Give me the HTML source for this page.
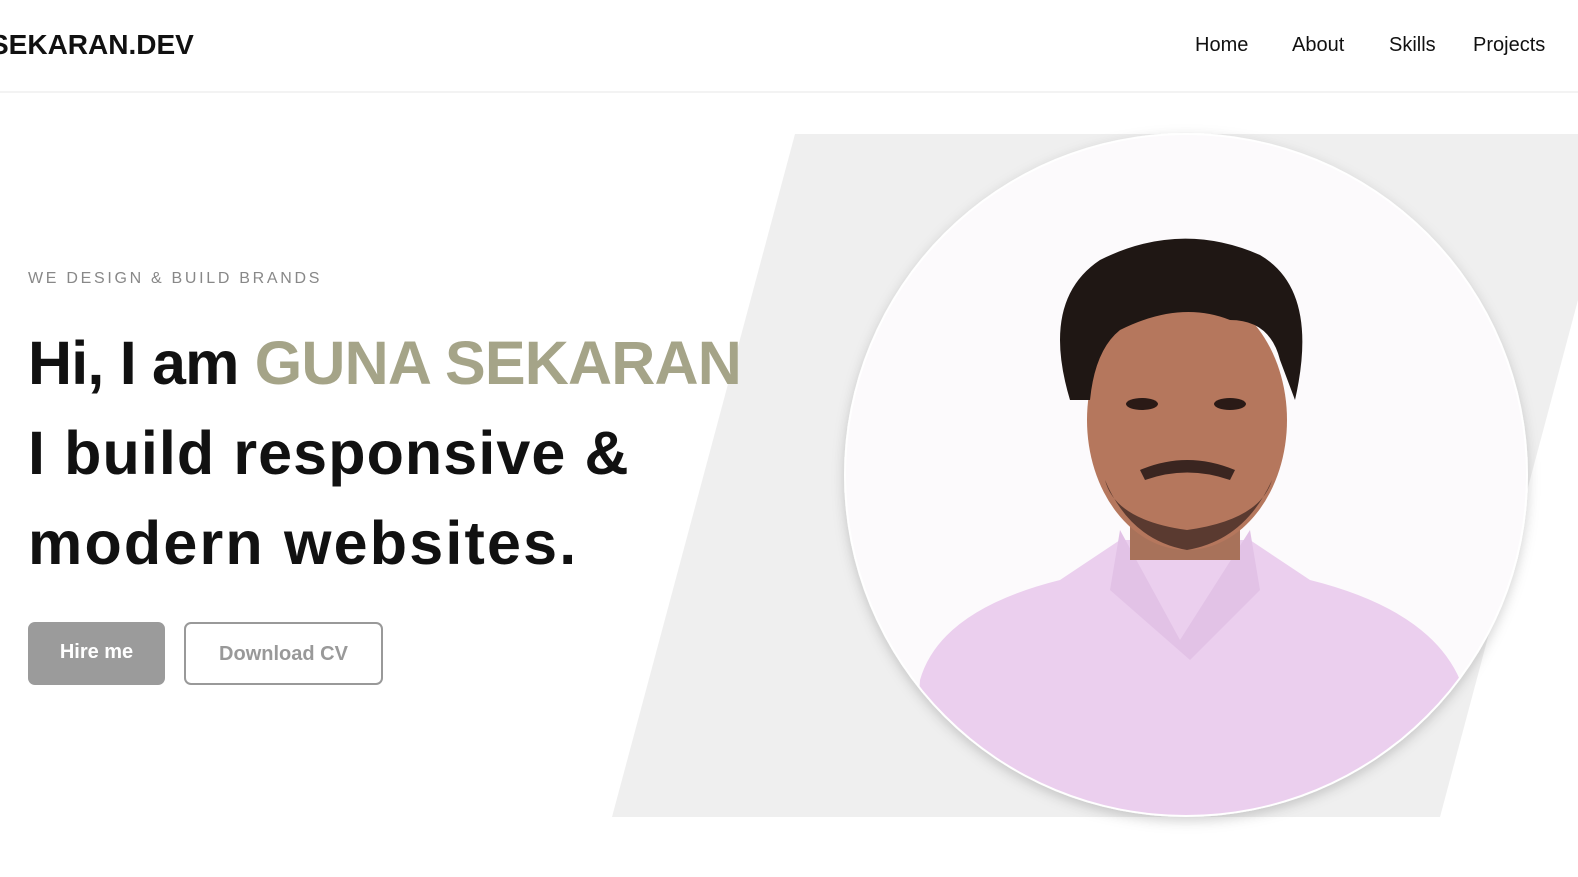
<!DOCTYPE html>
<html><head><style>
*{margin:0;padding:0;box-sizing:border-box}
body{width:1578px;height:877px;overflow:hidden;background:#fff;font-family:"Liberation Sans",sans-serif;position:relative}
.hdr{position:absolute;left:0;top:0;width:1578px;height:93px;background:#fff;border-bottom:2px solid #f3f3f3}
.logo{position:absolute;left:-10px;top:29px;font-size:28px;font-weight:bold;color:#111;letter-spacing:0}
.nav{position:absolute;top:34px;font-size:20px;color:#111}
.tag{position:absolute;left:28px;top:270px;font-size:16px;letter-spacing:2.7px;color:#888}
h1{position:absolute;left:28px;top:318px;font-size:61px;line-height:90px;font-weight:bold;color:#111;white-space:nowrap}
h1 div:nth-child(1){letter-spacing:-0.8px}
h1 div:nth-child(2){letter-spacing:1.1px}
h1 div:nth-child(3){letter-spacing:2.2px}
h1 span{color:#a5a488}
.b1{position:absolute;left:28px;top:622px;width:137px;height:63px;background:#9b9b9b;border-radius:7px;color:#fff;font-weight:bold;font-size:20px;text-align:center;line-height:60px}
.b2{position:absolute;left:184px;top:622px;width:199px;height:63px;border:2px solid #999;border-radius:7px;color:#999;font-weight:bold;font-size:20px;text-align:center;line-height:61px}
</style></head><body>
<svg style="position:absolute;left:0;top:0" width="1578" height="877">
<defs>
<clipPath id="c"><circle cx="1186" cy="475" r="340"/></clipPath>
<filter id="s" x="-20%" y="-20%" width="140%" height="140%"><feDropShadow dx="0" dy="4" stdDeviation="6" flood-color="#000" flood-opacity="0.18"/></filter>
</defs>
<polygon points="795,134 1578,134 1578,300 1440,817 612,817" fill="#efefef"/>
<circle cx="1186" cy="475" r="342" fill="#fff" filter="url(#s)"/>
<g clip-path="url(#c)">
<rect x="840" y="130" width="700" height="700" fill="#fcfafc"/>
<path d="M920,680 Q940,610 1060,580 L1120,540 L1250,540 L1310,580 Q1430,610 1460,680 L1470,830 L910,830 Z" fill="#ebcfee"/>
<path d="M1120,530 L1180,640 L1250,530 L1260,590 L1190,660 L1110,590 Z" fill="#e2c2e6"/>
<rect x="1130" y="470" width="110" height="90" fill="#a8725a"/>
<ellipse cx="1187" cy="420" rx="100" ry="130" fill="#b5775d"/>
<path d="M1140,470 Q1187,450 1235,470 L1230,480 Q1187,465 1145,480 Z" fill="#3a2520"/>
<path d="M1105,480 Q1130,540 1187,550 Q1245,540 1272,480 Q1260,520 1187,530 Q1115,520 1105,480 Z" fill="#5a3a30"/>
<path d="M1070,400 Q1040,300 1100,260 Q1180,220 1260,255 Q1320,290 1295,400 L1280,360 Q1270,320 1230,320 Q1180,300 1120,330 Q1095,350 1090,400 Z" fill="#1f1714"/>
<ellipse cx="1142" cy="404" rx="16" ry="6" fill="#2a1a16"/>
<ellipse cx="1230" cy="404" rx="16" ry="6" fill="#2a1a16"/>
</g>
</svg>
<div class="hdr">
<div class="logo">SEKARAN.DEV</div>
<div class="nav" style="left:1195px">Home</div>
<div class="nav" style="left:1292px">About</div>
<div class="nav" style="left:1389px">Skills</div>
<div class="nav" style="left:1473px">Projects</div>
</div>
<div class="tag">WE DESIGN &amp; BUILD BRANDS</div>
<h1><div>Hi, I am <span>GUNA SEKARAN</span></div><div>I build responsive &amp;</div><div>modern websites.</div></h1>
<div class="b1">Hire me</div>
<div class="b2">Download CV</div>
</body></html>
